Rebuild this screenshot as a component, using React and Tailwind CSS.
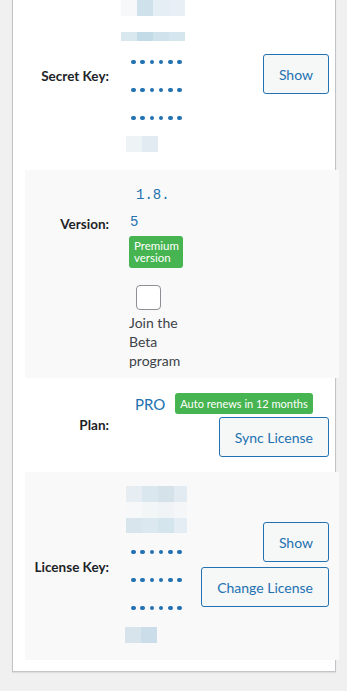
import React from "react";

const font = { fontFamily: 'Lato, "Noto Sans", Arial, sans-serif' };

// pixelated (obscured) text blocks
function Mosaic({ rows, className = "" }) {
  return (
    <div className={"flex flex-col " + className}>
      {rows.map((r, i) => (
        <div key={i} className="flex" style={{ height: r.h }}>
          {r.c.map((c, j) => (
            <div key={j} style={{ background: c, width: r.w ? r.w[j] : 16 }} />
          ))}
        </div>
      ))}
    </div>
  );
}

function Dots() {
  return (
    <div className="flex flex-col ml-[10px]">
      {[0, 1, 2].map((i) => (
        <div key={i} className="h-[28px] flex items-center gap-[4.8px]">
          {[0, 1, 2, 3, 4, 5].map((j) => (
            <span key={j} className="w-[4.5px] h-[4.5px] rounded-full bg-[#2271b1]" />
          ))}
        </div>
      ))}
    </div>
  );
}

function Btn({ children, className = "" }) {
  return (
    <button
      className={
        "h-[40px] px-[15px] border border-[#2271b1] bg-[#f6f7f7] text-[#2271b1] text-[14px] rounded-[3px] whitespace-nowrap " +
        className
      }
    >
      {children}
    </button>
  );
}

function Label({ children, className = "" }) {
  return (
    <div className={"w-[84px] shrink-0 text-right text-[13.5px] font-bold text-[#1d2327] leading-[20px] " + className}>
      {children}
    </div>
  );
}

export default function App() {
  return (
    <div className="min-h-screen bg-[#f0f0f1] pb-[20px]" style={font}>
      <div className="ml-[12px] w-[324px] bg-white border border-t-0 border-[#c3c4c7] shadow-[0_1px_1px_rgba(0,0,0,0.08)] pl-[12px] pb-[11px]">
        {/* Secret key */}
        <div className="w-[314px] flex items-center pb-[18px]">
          <Label>Secret Key:</Label>
          <div className="flex-1 ml-[12px] flex flex-col">
            <Mosaic
              rows={[
                { h: 16, c: ["#f6f8fa", "#cfe2ec", "#e5eef4", "#e8f0f5"] },
                { h: 16, c: ["#fff"] },
                { h: 9, c: ["#d9e7ef", "#c2dbe7", "#d0e2eb", "#d6e6ef"] },
              ]}
            />
            <div className="mt-[7px]">
              <Dots />
            </div>
            <Mosaic className="ml-[5px] mt-[4px]" rows={[{ h: 16, c: ["#eef3f6", "#e2ebf1"] }]} />
          </div>
          <div className="pr-[10px] mb-[4px]">
            <Btn>Show</Btn>
          </div>
        </div>

        {/* Version */}
        <div className="w-[314px] bg-[#f9f9f9] flex items-start pt-[11px] pb-[8px]">
          <Label className="mt-[33px]">Version:</Label>
          <div className="flex-1 ml-[12px] pl-[8px] flex flex-col items-start">
            <div className="text-[#2271b1] text-[14px]" style={{ fontFamily: '"Liberation Mono", monospace' }}>
              <div className="h-[28px] leading-[28px] pl-[7px]">1.8.</div>
              <div className="h-[27px] leading-[27px] pl-[1px]">5</div>
            </div>
            <div className="bg-[#46b450] text-white text-[11.5px] leading-[12px] rounded-[3px] px-[5px] pt-[4px] pb-[4px] w-[54px]">
              Premium
              <br />
              version
            </div>
            <div className="mt-[17px] ml-[7px] w-[25px] h-[25px] bg-white border border-[#8c8f94] rounded-[4px]" />
            <div className="mt-[3px] text-[14px] leading-[19px] text-[#3c434a]">
              Join the
              <br />
              Beta
              <br />
              program
            </div>
          </div>
        </div>

        {/* Plan */}
        <div className="w-[314px] flex items-center pt-[15px] pb-[15px]">
          <Label>Plan:</Label>
          <div className="flex-1 ml-[12px] pr-[10px] flex flex-col">
            <div className="flex items-center">
              <span className="ml-[14px] text-[15px] text-[#2271b1] leading-[20px]">PRO</span>
              <span className="ml-[10px] bg-[#46b450] text-white text-[11px] leading-[21px] h-[21px] rounded-[3px] px-[5px] whitespace-nowrap">
                Auto renews in 12 months
              </span>
            </div>
            <Btn className="self-end mt-[3px] h-[39px]">Sync License</Btn>
          </div>
        </div>

        {/* License key */}
        <div className="w-[314px] bg-[#f9f9f9] flex items-center pt-[14px] pb-[17px]">
          <Label className="mt-[5px]">License Key:</Label>
          <div className="flex-1 ml-[12px] flex flex-col">
            <Mosaic
              className="ml-[5px]"
              rows={[
                { h: 16, c: ["#e6eef3", "#dbe7ee", "#d5e2ea", "#e1ebf1"], w: [16, 16, 16, 13] },
                { h: 16, c: ["#f6f8f9", "#f3f6f7", "#f1f4f6", "#f4f6f8"], w: [16, 16, 16, 13] },
                { h: 15, c: ["#d8e5ec", "#dce8ef", "#d5e5ee", "#e3edf3"], w: [16, 16, 16, 13] },
              ]}
            />
            <div className="mt-[5px]">
              <Dots />
            </div>
            <Mosaic className="ml-[4px] mt-[5px]" rows={[{ h: 16, c: ["#d7e4ec", "#cbdde8"] }]} />
          </div>
          <div className="pr-[10px] flex flex-col items-end gap-[5px]">
            <Btn>Show</Btn>
            <Btn>Change License</Btn>
          </div>
        </div>
      </div>
    </div>
  );
}
